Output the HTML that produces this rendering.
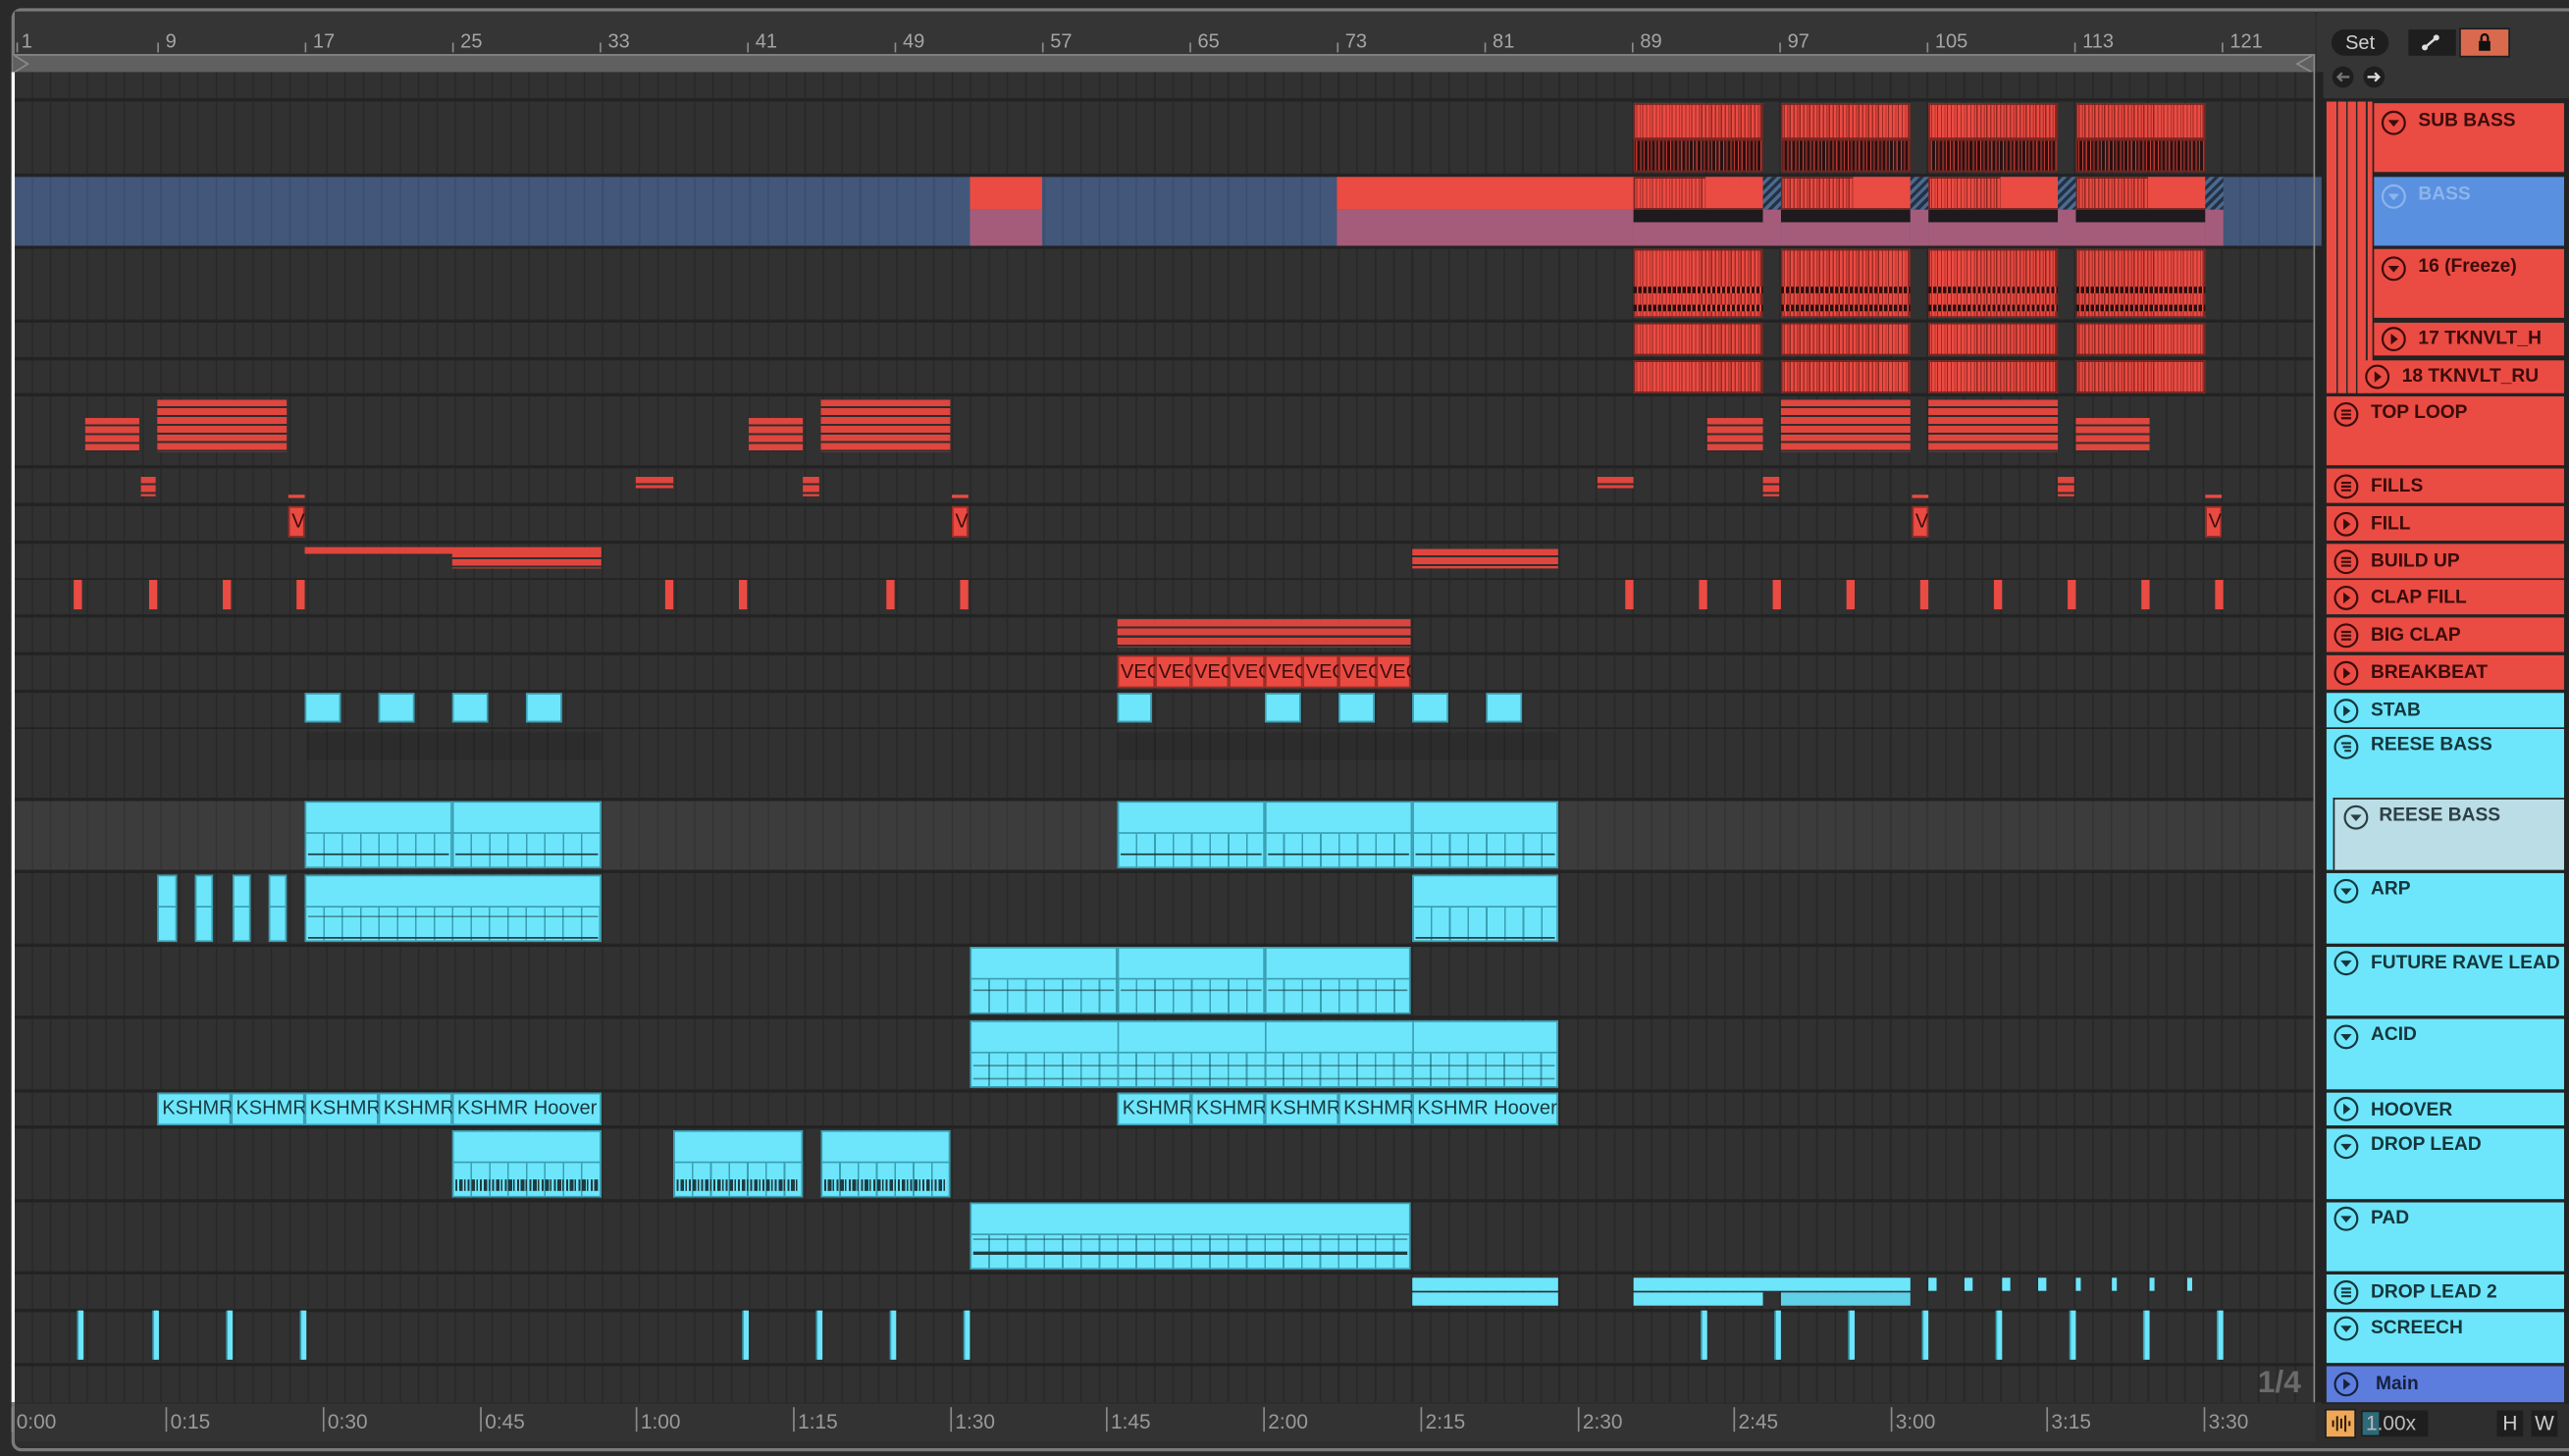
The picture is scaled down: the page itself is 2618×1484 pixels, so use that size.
<!DOCTYPE html>
<html><head><meta charset="utf-8"><style>
html,body{margin:0;padding:0;background:#2a2a2a;width:2618px;height:1484px;overflow:hidden}
#w{position:absolute;left:0;top:0;width:1568px;height:889px;transform:scale(1.669643);transform-origin:0 0;background:#2a2a2a;overflow:hidden;font-family:"Liberation Sans",sans-serif}
.a{position:absolute}
.row{position:absolute;left:7px;width:1405px;background-color:#313131;background-image:repeating-linear-gradient(90deg,#282828 0 1px,transparent 1px 11.23px);background-position:1px 0}
.rs{position:absolute;background:repeating-linear-gradient(90deg,#ea4b43 0 1.6px,#9e2e27 1.6px 2.4px,#ea4b43 2.4px 3.7px,#b3362e 3.7px 4.5px,#ea4b43 4.5px 5.2px,#8f2822 5.2px 6px);box-shadow:inset 0 0 0 1px #7a2520}
.rd{position:absolute;background:repeating-linear-gradient(90deg,#3a1616 0 1.5px,#b5362e 1.5px 2.2px,#2a1010 2.2px 4px,#c2443a 4px 4.6px);box-shadow:inset 0 0 0 1px #7a2520}
.r{position:absolute;background:#ea4b43}
.hl{position:absolute;background:repeating-linear-gradient(180deg,#e0453e 0 4.1px,#2e2e2e 4.1px 5.3px)}
.c{position:absolute;background:#6de6fb;box-shadow:inset 0 0 0 1px #3a9fb3}
.cl{position:absolute;left:0;right:0;bottom:0;height:52%;background:repeating-linear-gradient(90deg,#3a9fb3 0 1px,transparent 1px 11.23px);border-top:1px solid #3a9fb3}
.nl{position:absolute;height:1.4px;background:#1f3a40}
.bc{position:absolute;left:2px;right:2px;bottom:4px;height:7px;background:repeating-linear-gradient(90deg,#1f3a40 0 1.2px,transparent 1.2px 2.3px,#1f3a40 2.3px 4.5px,transparent 4.5px 5.3px,#1f3a40 5.3px 6.2px,transparent 6.2px 7.5px)}
.k{position:absolute;background:#6de6fb;box-shadow:inset 0 0 0 1px #3a9fb3;font-size:12px;color:#1a3a40;line-height:19px;padding-left:3px;overflow:hidden;white-space:nowrap;box-sizing:border-box}
.v{position:absolute;background:#e94a42;box-shadow:inset 0 0 0 1px #9a2c25;font-size:12px;color:#3a0e0c;line-height:20px;padding-left:2px;overflow:hidden;white-space:nowrap;box-sizing:border-box}
.n{position:absolute;top:18px;font-size:12px;color:#a5a5a5}
.tk{position:absolute;top:26px;width:1px;height:6px;background:#8a8a8a}
.t{position:absolute;top:859px;font-size:12.5px;color:#9a9a9a;border-left:1px solid #8a8a8a;padding-left:2px;line-height:12px;padding-top:3px}
.lb{position:absolute;box-sizing:border-box;font-weight:bold;font-size:11.5px;color:#3a0c0a;padding-left:27px;line-height:22px;white-space:nowrap;overflow:hidden}
.lb svg{position:absolute;left:4px;top:4px}
.R{background:#ea4b43}.C{background:#6de6fb;color:#15363c}
.cf{position:absolute;width:5px;height:18px;background:#ea4b43;top:354px}
.sc{position:absolute;width:3px;top:800px;height:30px;background:#6de6fb;box-shadow:-1px 0 0 #3a9fb3}
.dl{position:absolute;top:780px;height:8px;background:#6de6fb}
</style></head><body><div id="w">
<div class="a" style="left:7px;top:5px;width:1600px;height:877px;border:2px solid #7a7a7a;border-radius:6px;background:#2e2e2e"></div>
<div class="a" style="left:9px;top:7px;width:1404px;height:27px;background:#353535"></div>
<div class="a" style="left:1414px;top:7px;width:160px;height:55px;background:#353535"></div>
<div class="a" style="left:8px;top:33px;width:1404px;height:10px;background:#606060;border-top:1px solid #888;border-bottom:1px solid #888"></div>
<svg class="a" style="left:8px;top:33px" width="12" height="12"><path d="M1 1 L9 6 L1 11" fill="none" stroke="#8a8a8a" stroke-width="1"/></svg>
<svg class="a" style="left:1398px;top:33px" width="14" height="12"><path d="M13 1 L4 6 L13 11" fill="none" stroke="#8a8a8a" stroke-width="1"/></svg>
<div class="tk" style="left:10px"></div><div class="n" style="left:13px">1</div>
<div class="tk" style="left:96px"></div><div class="n" style="left:101px">9</div>
<div class="tk" style="left:186px"></div><div class="n" style="left:191px">17</div>
<div class="tk" style="left:276px"></div><div class="n" style="left:281px">25</div>
<div class="tk" style="left:366px"></div><div class="n" style="left:371px">33</div>
<div class="tk" style="left:456px"></div><div class="n" style="left:461px">41</div>
<div class="tk" style="left:546px"></div><div class="n" style="left:551px">49</div>
<div class="tk" style="left:636px"></div><div class="n" style="left:641px">57</div>
<div class="tk" style="left:726px"></div><div class="n" style="left:731px">65</div>
<div class="tk" style="left:816px"></div><div class="n" style="left:821px">73</div>
<div class="tk" style="left:906px"></div><div class="n" style="left:911px">81</div>
<div class="tk" style="left:996px"></div><div class="n" style="left:1001px">89</div>
<div class="tk" style="left:1086px"></div><div class="n" style="left:1091px">97</div>
<div class="tk" style="left:1176px"></div><div class="n" style="left:1181px">105</div>
<div class="tk" style="left:1266px"></div><div class="n" style="left:1271px">113</div>
<div class="tk" style="left:1356px"></div><div class="n" style="left:1361px">121</div>
<div class="a" style="left:7px;top:44px;width:1411px;height:812px;background:#232323"></div>
<div class="row" style="top:44px;height:16px"></div>
<div class="row" style="top:62px;height:44px"></div>
<div class="row" style="top:107.5px;height:42.5px;background-color:#42577a;background-image:repeating-linear-gradient(90deg,#3a4e6e 0 1px,transparent 1px 11.23px);width:1410px"></div>
<div class="row" style="top:151.5px;height:43px"></div>
<div class="row" style="top:196.5px;height:21px"></div>
<div class="row" style="top:219.5px;height:20.5px"></div>
<div class="row" style="top:242px;height:42px"></div>
<div class="row" style="top:286px;height:21px"></div>
<div class="row" style="top:309px;height:21px"></div>
<div class="row" style="top:332px;height:20.5px"></div>
<div class="row" style="top:354px;height:21px"></div>
<div class="row" style="top:377px;height:21px"></div>
<div class="row" style="top:400px;height:21px"></div>
<div class="row" style="top:423px;height:20.5px"></div>
<div class="row" style="top:445px;height:42px"></div>
<div class="row" style="top:489px;height:42px;background-color:#3c3c3c;background-image:repeating-linear-gradient(90deg,#343434 0 1px,transparent 1px 11.23px)"></div>
<div class="row" style="top:533px;height:42.5px"></div>
<div class="row" style="top:577.5px;height:42.5px"></div>
<div class="row" style="top:622px;height:42.5px"></div>
<div class="row" style="top:666.5px;height:20.5px"></div>
<div class="row" style="top:689px;height:42.5px"></div>
<div class="row" style="top:733.5px;height:42.5px"></div>
<div class="row" style="top:778px;height:20.5px"></div>
<div class="row" style="top:800.5px;height:31.5px"></div>
<div class="row" style="top:834px;height:22px"></div>
<div class="a" style="left:7px;top:44px;width:1.5px;height:812px;background:#fff"></div>
<div class="a" style="left:9px;top:857px;width:1404px;height:23px;background:#333"></div>
<div class="t" style="left:7px">0:00</div><div class="t" style="left:101px">0:15</div><div class="t" style="left:197px">0:30</div><div class="t" style="left:293px">0:45</div><div class="t" style="left:388px">1:00</div><div class="t" style="left:484px">1:15</div><div class="t" style="left:580px">1:30</div><div class="t" style="left:675px">1:45</div><div class="t" style="left:771px">2:00</div><div class="t" style="left:867px">2:15</div><div class="t" style="left:963px">2:30</div><div class="t" style="left:1058px">2:45</div><div class="t" style="left:1154px">3:00</div><div class="t" style="left:1249px">3:15</div><div class="t" style="left:1345px">3:30</div>
<div class="a" style="left:1378px;top:834px;font-size:19px;font-weight:bold;color:#6a6a6a">1/4</div>
<div class="a" style="left:1412px;top:33px;width:1px;height:823px;background:#8a8a8a"></div>

<div class="rs" style="left:997px;top:63px;width:79px;height:22px"></div><div class="rd" style="left:997px;top:85px;width:79px;height:20px"></div>
<div class="rs" style="left:1087px;top:63px;width:79px;height:22px"></div><div class="rd" style="left:1087px;top:85px;width:79px;height:20px"></div>
<div class="rs" style="left:1177px;top:63px;width:79px;height:22px"></div><div class="rd" style="left:1177px;top:85px;width:79px;height:20px"></div>
<div class="rs" style="left:1267px;top:63px;width:79px;height:22px"></div><div class="rd" style="left:1267px;top:85px;width:79px;height:20px"></div>
<div class="r" style="left:592px;top:108px;width:44px;height:20px"></div><div class="a" style="left:592px;top:128px;width:44px;height:22px;background:#a55c7a"></div>
<div class="r" style="left:816px;top:108px;width:181px;height:20px"></div><div class="a" style="left:816px;top:128px;width:181px;height:22px;background:#a55c7a"></div>
<div class="rs" style="left:997px;top:108px;width:79px;height:20px"></div><div class="a" style="left:997px;top:128px;width:79px;height:22px;background:linear-gradient(180deg,#1e1a1e 0 35%,#a55c7a 35%)"></div>
<div class="rs" style="left:1087px;top:108px;width:79px;height:20px"></div><div class="a" style="left:1087px;top:128px;width:79px;height:22px;background:linear-gradient(180deg,#1e1a1e 0 35%,#a55c7a 35%)"></div>
<div class="rs" style="left:1177px;top:108px;width:79px;height:20px"></div><div class="a" style="left:1177px;top:128px;width:79px;height:22px;background:linear-gradient(180deg,#1e1a1e 0 35%,#a55c7a 35%)"></div>
<div class="rs" style="left:1267px;top:108px;width:79px;height:20px"></div><div class="a" style="left:1267px;top:128px;width:79px;height:22px;background:linear-gradient(180deg,#1e1a1e 0 35%,#a55c7a 35%)"></div>
<div class="r" style="left:1041px;top:108px;width:35px;height:19px"></div><div class="r" style="left:1131px;top:108px;width:35px;height:19px"></div><div class="r" style="left:1221px;top:108px;width:35px;height:19px"></div><div class="r" style="left:1311px;top:108px;width:35px;height:19px"></div>
<div class="a" style="left:1076px;top:108px;width:11px;height:20px;background:repeating-linear-gradient(135deg,#253142 0 2px,#4a6a90 2px 4px)"></div><div class="a" style="left:1076px;top:128px;width:11px;height:22px;background:#a55c7a"></div>
<div class="a" style="left:1166px;top:108px;width:11px;height:20px;background:repeating-linear-gradient(135deg,#253142 0 2px,#4a6a90 2px 4px)"></div><div class="a" style="left:1166px;top:128px;width:11px;height:22px;background:#a55c7a"></div>
<div class="a" style="left:1256px;top:108px;width:11px;height:20px;background:repeating-linear-gradient(135deg,#253142 0 2px,#4a6a90 2px 4px)"></div><div class="a" style="left:1256px;top:128px;width:11px;height:22px;background:#a55c7a"></div>
<div class="a" style="left:1346px;top:108px;width:11px;height:20px;background:repeating-linear-gradient(135deg,#253142 0 2px,#4a6a90 2px 4px)"></div><div class="a" style="left:1346px;top:128px;width:11px;height:22px;background:#a55c7a"></div>
<div class="rs" style="left:997px;top:152px;width:79px;height:42px"></div><div class="rs" style="left:1087px;top:152px;width:79px;height:42px"></div><div class="rs" style="left:1177px;top:152px;width:79px;height:42px"></div><div class="rs" style="left:1267px;top:152px;width:79px;height:42px"></div>
<div class="a" style="left:997px;top:175px;width:79px;height:4px;background:repeating-linear-gradient(90deg,#2a0e0e 0 2px,#ea4b43 2px 3px)"></div><div class="a" style="left:1087px;top:175px;width:79px;height:4px;background:repeating-linear-gradient(90deg,#2a0e0e 0 2px,#ea4b43 2px 3px)"></div><div class="a" style="left:1177px;top:175px;width:79px;height:4px;background:repeating-linear-gradient(90deg,#2a0e0e 0 2px,#ea4b43 2px 3px)"></div><div class="a" style="left:1267px;top:175px;width:79px;height:4px;background:repeating-linear-gradient(90deg,#2a0e0e 0 2px,#ea4b43 2px 3px)"></div>
<div class="a" style="left:997px;top:186px;width:79px;height:4px;background:repeating-linear-gradient(90deg,#2a0e0e 0 2px,#ea4b43 2px 3px)"></div><div class="a" style="left:1087px;top:186px;width:79px;height:4px;background:repeating-linear-gradient(90deg,#2a0e0e 0 2px,#ea4b43 2px 3px)"></div><div class="a" style="left:1177px;top:186px;width:79px;height:4px;background:repeating-linear-gradient(90deg,#2a0e0e 0 2px,#ea4b43 2px 3px)"></div><div class="a" style="left:1267px;top:186px;width:79px;height:4px;background:repeating-linear-gradient(90deg,#2a0e0e 0 2px,#ea4b43 2px 3px)"></div>
<div class="rs" style="left:997px;top:197px;width:79px;height:20px"></div><div class="rs" style="left:1087px;top:197px;width:79px;height:20px"></div><div class="rs" style="left:1177px;top:197px;width:79px;height:20px"></div><div class="rs" style="left:1267px;top:197px;width:79px;height:20px"></div>
<div class="rs" style="left:997px;top:220px;width:79px;height:20px"></div><div class="rs" style="left:1087px;top:220px;width:79px;height:20px"></div><div class="rs" style="left:1177px;top:220px;width:79px;height:20px"></div><div class="rs" style="left:1267px;top:220px;width:79px;height:20px"></div>
<div class="hl" style="left:52px;top:255px;width:33px;height:21px"></div>
<div class="hl" style="left:96px;top:244px;width:79px;height:32px"></div>
<div class="hl" style="left:457px;top:255px;width:33px;height:21px"></div>
<div class="hl" style="left:501px;top:244px;width:79px;height:32px"></div>
<div class="hl" style="left:1042px;top:255px;width:34px;height:21px"></div>
<div class="hl" style="left:1087px;top:244px;width:79px;height:32px"></div>
<div class="hl" style="left:1177px;top:244px;width:79px;height:32px"></div>
<div class="hl" style="left:1267px;top:255px;width:45px;height:21px"></div>
<div class="hl" style="left:86px;top:291px;width:9px;height:12px"></div>
<div class="hl" style="left:388px;top:291px;width:23px;height:7px"></div>
<div class="hl" style="left:490px;top:291px;width:10px;height:12px"></div>
<div class="hl" style="left:975px;top:291px;width:22px;height:7px"></div>
<div class="hl" style="left:1076px;top:291px;width:10px;height:12px"></div>
<div class="hl" style="left:1256px;top:291px;width:10px;height:12px"></div>
<div class="r" style="left:176px;top:302px;width:10px;height:2px"></div><div class="v" style="left:176px;top:309px;width:10px;height:19px;line-height:19px">V</div>
<div class="r" style="left:581px;top:302px;width:10px;height:2px"></div><div class="v" style="left:581px;top:309px;width:10px;height:19px;line-height:19px">V</div>
<div class="r" style="left:1167px;top:302px;width:10px;height:2px"></div><div class="v" style="left:1167px;top:309px;width:10px;height:19px;line-height:19px">V</div>
<div class="r" style="left:1346px;top:302px;width:10px;height:2px"></div><div class="v" style="left:1346px;top:309px;width:10px;height:19px;line-height:19px">V</div>
<div class="hl" style="left:186px;top:334px;width:181px;height:5px"></div>
<div class="hl" style="left:276px;top:336px;width:91px;height:11px"></div>
<div class="hl" style="left:862px;top:335px;width:89px;height:12px"></div>
<div class="cf" style="left:45px"></div><div class="cf" style="left:91px"></div><div class="cf" style="left:136px"></div><div class="cf" style="left:181px"></div><div class="cf" style="left:406px"></div><div class="cf" style="left:451px"></div><div class="cf" style="left:541px"></div><div class="cf" style="left:586px"></div><div class="cf" style="left:992px"></div><div class="cf" style="left:1037px"></div><div class="cf" style="left:1082px"></div><div class="cf" style="left:1127px"></div><div class="cf" style="left:1172px"></div><div class="cf" style="left:1217px"></div><div class="cf" style="left:1262px"></div><div class="cf" style="left:1307px"></div><div class="cf" style="left:1352px"></div>
<div class="hl" style="left:682px;top:378px;width:179px;height:17px;background:repeating-linear-gradient(180deg,#d9463f 0 4.3px,#2e2e2e 4.3px 5.6px)"></div>
<div class="v" style="left:682px;top:400px;width:23px;height:20px">VEC</div><div class="v" style="left:705px;top:400px;width:22px;height:20px">VEC</div><div class="v" style="left:727px;top:400px;width:23px;height:20px">VEC</div><div class="v" style="left:750px;top:400px;width:22px;height:20px">VEC</div><div class="v" style="left:772px;top:400px;width:23px;height:20px">VEC</div><div class="v" style="left:795px;top:400px;width:22px;height:20px">VEC</div><div class="v" style="left:817px;top:400px;width:23px;height:20px">VEC</div><div class="v" style="left:840px;top:400px;width:21px;height:20px">VEC</div>
<div class="c" style="left:186px;top:423px;width:22px;height:18px"></div><div class="c" style="left:231px;top:423px;width:22px;height:18px"></div><div class="c" style="left:276px;top:423px;width:22px;height:18px"></div><div class="c" style="left:321px;top:423px;width:22px;height:18px"></div>
<div class="c" style="left:682px;top:423px;width:21px;height:18px"></div><div class="c" style="left:772px;top:423px;width:22px;height:18px"></div><div class="c" style="left:817px;top:423px;width:22px;height:18px"></div><div class="c" style="left:862px;top:423px;width:22px;height:18px"></div><div class="c" style="left:907px;top:423px;width:22px;height:18px"></div>
<div class="a" style="left:187px;top:447px;width:180px;height:17px;background:rgba(0,0,0,0.1)"></div>
<div class="a" style="left:682px;top:447px;width:269px;height:17px;background:rgba(0,0,0,0.1)"></div>
<div class="c" style="left:186px;top:489px;width:90px;height:41px"><div class="cl"></div><div class="nl" style="left:2px;right:2px;top:32px"></div></div>
<div class="c" style="left:276px;top:489px;width:91px;height:41px"><div class="cl"></div><div class="nl" style="left:2px;right:2px;top:32px"></div></div>
<div class="c" style="left:682px;top:489px;width:90px;height:41px"><div class="cl"></div><div class="nl" style="left:2px;right:2px;top:32px"></div></div>
<div class="c" style="left:772px;top:489px;width:90px;height:41px"><div class="cl"></div><div class="nl" style="left:2px;right:2px;top:32px"></div></div>
<div class="c" style="left:862px;top:489px;width:89px;height:41px"><div class="cl"></div><div class="nl" style="left:2px;right:2px;top:32px"></div></div>
<div class="c" style="left:96px;top:534px;width:12px;height:41px"><div class="cl"></div></div><div class="c" style="left:119px;top:534px;width:11px;height:41px"><div class="cl"></div></div><div class="c" style="left:142px;top:534px;width:11px;height:41px"><div class="cl"></div></div><div class="c" style="left:164px;top:534px;width:11px;height:41px"><div class="cl"></div></div>
<div class="c" style="left:186px;top:534px;width:181px;height:41px"><div class="cl"></div><div class="nl" style="left:2px;right:2px;top:38px"></div><div class="nl" style="left:2px;right:2px;top:25px;opacity:.5"></div></div>
<div class="c" style="left:862px;top:534px;width:89px;height:41px"><div class="cl"></div><div class="nl" style="left:2px;right:2px;top:38px"></div></div>
<div class="c" style="left:592px;top:578px;width:90px;height:41px"><div class="cl"></div><div class="nl" style="left:2px;right:2px;top:26px;opacity:.6"></div></div>
<div class="c" style="left:682px;top:578px;width:90px;height:41px"><div class="cl"></div><div class="nl" style="left:2px;right:2px;top:26px;opacity:.6"></div></div>
<div class="c" style="left:772px;top:578px;width:89px;height:41px"><div class="cl"></div><div class="nl" style="left:2px;right:2px;top:26px;opacity:.6"></div></div>
<div class="c" style="left:592px;top:623px;width:359px;height:41px"><div class="cl"></div><div class="nl" style="left:2px;right:2px;top:27px;opacity:.5"></div><div class="nl" style="left:2px;right:2px;top:35px;opacity:.5"></div></div>
<div class="a" style="left:682px;top:623px;width:1px;height:41px;background:#3a9fb3"></div><div class="a" style="left:772px;top:623px;width:1px;height:41px;background:#3a9fb3"></div><div class="a" style="left:862px;top:623px;width:1px;height:41px;background:#3a9fb3"></div>
<div class="k" style="left:96px;top:667px;width:45px;height:20px">KSHMR</div><div class="k" style="left:141px;top:667px;width:45px;height:20px">KSHMR</div><div class="k" style="left:186px;top:667px;width:45px;height:20px">KSHMR</div><div class="k" style="left:231px;top:667px;width:45px;height:20px">KSHMR</div><div class="k" style="left:276px;top:667px;width:91px;height:20px">KSHMR Hoover</div>
<div class="k" style="left:682px;top:667px;width:45px;height:20px">KSHMR</div><div class="k" style="left:727px;top:667px;width:45px;height:20px">KSHMR</div><div class="k" style="left:772px;top:667px;width:45px;height:20px">KSHMR</div><div class="k" style="left:817px;top:667px;width:45px;height:20px">KSHMR</div><div class="k" style="left:862px;top:667px;width:89px;height:20px">KSHMR Hoover</div>
<div class="c" style="left:276px;top:690px;width:91px;height:41px"><div class="cl"></div><div class="bc"></div></div>
<div class="c" style="left:411px;top:690px;width:79px;height:41px"><div class="cl"></div><div class="bc"></div></div>
<div class="c" style="left:501px;top:690px;width:79px;height:41px"><div class="cl"></div><div class="bc"></div></div>
<div class="c" style="left:592px;top:734px;width:269px;height:41px"><div class="cl"></div><div class="nl" style="left:2px;right:2px;top:30px;height:2px"></div><div class="nl" style="left:2px;right:2px;top:22px;opacity:.5"></div></div>
<div class="dl" style="left:862px;width:89px"></div><div class="dl" style="left:862px;top:789px;width:89px"></div>
<div class="dl" style="left:997px;width:169px"></div><div class="dl" style="left:997px;top:789px;width:79px"></div><div class="dl" style="left:1087px;top:789px;width:79px;background:#5fd0e6"></div>
<div class="dl" style="left:1177px;width:5px"></div><div class="dl" style="left:1199px;width:5px"></div><div class="dl" style="left:1222px;width:5px"></div><div class="dl" style="left:1244px;width:5px"></div><div class="dl" style="left:1267px;width:3px"></div><div class="dl" style="left:1289px;width:3px"></div><div class="dl" style="left:1312px;width:3px"></div><div class="dl" style="left:1335px;width:3px"></div>
<div class="sc" style="left:48px"></div><div class="sc" style="left:94px"></div><div class="sc" style="left:139px"></div><div class="sc" style="left:184px"></div><div class="sc" style="left:454px"></div><div class="sc" style="left:499px"></div><div class="sc" style="left:544px"></div><div class="sc" style="left:589px"></div><div class="sc" style="left:1039px"></div><div class="sc" style="left:1084px"></div><div class="sc" style="left:1129px"></div><div class="sc" style="left:1174px"></div><div class="sc" style="left:1219px"></div><div class="sc" style="left:1264px"></div><div class="sc" style="left:1309px"></div><div class="sc" style="left:1354px"></div>

<div class="a" style="left:1417px;top:60px;width:151px;height:797px;background:#232323"></div>
<div class="a" style="left:1423px;top:18px;width:35px;height:16px;border-radius:8px;background:#1e1e1e;color:#cfcfcf;font-size:12px;line-height:16px;text-align:center">Set</div>
<div class="a" style="left:1470px;top:18px;width:29px;height:16px;background:#1e1e1e"><svg width="29" height="16"><path d="M10 11 L17 5" stroke="#ddd" stroke-width="1.5"/><circle cx="10" cy="11" r="1.8" fill="#ddd"/><circle cx="17" cy="5" r="1.8" fill="#ddd"/></svg></div>
<div class="a" style="left:1502px;top:18px;width:29px;height:16px;background:#da6a4e;box-shadow:0 0 0 1px #1e1e1e"><svg width="29" height="16"><rect x="11" y="7" width="7" height="6" fill="#111"/><path d="M12.5 7 V5 a2 2 0 0 1 4 0 V7" fill="none" stroke="#111" stroke-width="1.4"/></svg></div>
<svg class="a" style="left:1423px;top:40px" width="40" height="14"><circle cx="7" cy="7" r="6.5" fill="#1e1e1e"/><path d="M11 7 H4 M6.5 4.5 L4 7 L6.5 9.5" stroke="#777" stroke-width="1.4" fill="none"/><circle cx="26" cy="7" r="6.5" fill="#1e1e1e"/><path d="M22 7 H29 M26.5 4.5 L29 7 L26.5 9.5" stroke="#ddd" stroke-width="1.4" fill="none"/></svg>
<div class="a" style="left:1420px;top:62px;width:28px;height:178px;background:repeating-linear-gradient(90deg,#ea4b43 0 5px,#2a2a2a 5px 6px);background-position:1px 0"></div>
<div class="lb R" style="left:1449px;top:63px;width:116px;height:42px"><svg width="16" height="16"><circle cx="8" cy="8" r="6.8" fill="none" stroke="#3a0c0a" stroke-width="1.3"/><path d="M4.6 6.3 H11.4 L8 10.3Z" fill="#3a0c0a"/></svg>SUB BASS</div>
<div class="lb" style="left:1449px;top:107.5px;width:116px;height:42.5px;background:#5a90e0;color:#8db5ec"><svg width="16" height="16"><circle cx="8" cy="8" r="6.8" fill="none" stroke="#8db5ec" stroke-width="1.3"/><path d="M4.6 6.3 H11.4 L8 10.3Z" fill="#8db5ec"/></svg>BASS</div>
<div class="lb R" style="left:1449px;top:152px;width:116px;height:42px"><svg width="16" height="16"><circle cx="8" cy="8" r="6.8" fill="none" stroke="#3a0c0a" stroke-width="1.3"/><path d="M4.6 6.3 H11.4 L8 10.3Z" fill="#3a0c0a"/></svg>16 (Freeze)</div>
<div class="lb R" style="left:1449px;top:196.5px;width:116px;height:20.5px;line-height:21px"><svg width="16" height="16" style="top:2.5px"><circle cx="8" cy="8" r="6.8" fill="none" stroke="#3a0c0a" stroke-width="1.3"/><path d="M6.3 4.6 V11.4 L10.6 8Z" fill="#3a0c0a"/></svg>17 TKNVLT_H</div>
<div class="lb R" style="left:1439px;top:219.5px;width:126px;height:20.5px;line-height:21px"><svg width="16" height="16" style="top:2.5px"><circle cx="8" cy="8" r="6.8" fill="none" stroke="#3a0c0a" stroke-width="1.3"/><path d="M6.3 4.6 V11.4 L10.6 8Z" fill="#3a0c0a"/></svg>18 TKNVLT_RU</div>
<div class="lb R" style="left:1420px;top:242px;width:145px;height:42px;line-height:21px"><svg width="16" height="16" style="top:2.5px"><circle cx="8" cy="8" r="6.8" fill="none" stroke="#3a0c0a" stroke-width="1.3"/><path d="M5 5.7 H11 M5 8 H11 M5 10.3 H11" stroke="#3a0c0a" stroke-width="1.3"/></svg>TOP LOOP</div>
<div class="lb R" style="left:1420px;top:286px;width:145px;height:21px"><svg width="16" height="16" style="top:2.5px"><circle cx="8" cy="8" r="6.8" fill="none" stroke="#3a0c0a" stroke-width="1.3"/><path d="M5 5.7 H11 M5 8 H11 M5 10.3 H11" stroke="#3a0c0a" stroke-width="1.3"/></svg>FILLS</div>
<div class="lb R" style="left:1420px;top:309px;width:145px;height:21px"><svg width="16" height="16" style="top:2.5px"><circle cx="8" cy="8" r="6.8" fill="none" stroke="#3a0c0a" stroke-width="1.3"/><path d="M6.3 4.6 V11.4 L10.6 8Z" fill="#3a0c0a"/></svg>FILL</div>
<div class="lb R" style="left:1420px;top:332px;width:145px;height:20.5px"><svg width="16" height="16" style="top:2.5px"><circle cx="8" cy="8" r="6.8" fill="none" stroke="#3a0c0a" stroke-width="1.3"/><path d="M5 5.7 H11 M5 8 H11 M5 10.3 H11" stroke="#3a0c0a" stroke-width="1.3"/></svg>BUILD UP</div>
<div class="lb R" style="left:1420px;top:354px;width:145px;height:21px"><svg width="16" height="16" style="top:2.5px"><circle cx="8" cy="8" r="6.8" fill="none" stroke="#3a0c0a" stroke-width="1.3"/><path d="M6.3 4.6 V11.4 L10.6 8Z" fill="#3a0c0a"/></svg>CLAP FILL</div>
<div class="lb R" style="left:1420px;top:377px;width:145px;height:21px"><svg width="16" height="16" style="top:2.5px"><circle cx="8" cy="8" r="6.8" fill="none" stroke="#3a0c0a" stroke-width="1.3"/><path d="M5 5.7 H11 M5 8 H11 M5 10.3 H11" stroke="#3a0c0a" stroke-width="1.3"/></svg>BIG CLAP</div>
<div class="lb R" style="left:1420px;top:400px;width:145px;height:21px"><svg width="16" height="16" style="top:2.5px"><circle cx="8" cy="8" r="6.8" fill="none" stroke="#3a0c0a" stroke-width="1.3"/><path d="M6.3 4.6 V11.4 L10.6 8Z" fill="#3a0c0a"/></svg>BREAKBEAT</div>
<div class="lb C" style="left:1420px;top:423px;width:145px;height:20.5px"><svg width="16" height="16" style="top:2.5px"><circle cx="8" cy="8" r="6.8" fill="none" stroke="#15363c" stroke-width="1.3"/><path d="M6.3 4.6 V11.4 L10.6 8Z" fill="#15363c"/></svg>STAB</div>
<div class="lb C" style="left:1420px;top:445px;width:145px;height:86px;line-height:21px"><svg width="16" height="16" style="top:2.5px"><circle cx="8" cy="8" r="6.8" fill="none" stroke="#15363c" stroke-width="1.3"/><path d="M5 5.7 H11 M6 8 H11 M7 10.3 H11" stroke="#15363c" stroke-width="1.3"/></svg>REESE BASS</div>
<div class="lb" style="left:1424px;top:487px;width:141px;height:44px;background:#badde6;border:1.5px solid #222;border-right:none;border-bottom:none;color:#2d3f44;padding-left:27px;line-height:21px"><svg width="16" height="16" style="left:5px;top:2.5px"><circle cx="8" cy="8" r="6.8" fill="none" stroke="#2d3f44" stroke-width="1.3"/><path d="M4.6 6.3 H11.4 L8 10.3Z" fill="#2d3f44"/></svg>REESE BASS</div>
<div class="lb C" style="left:1420px;top:533px;width:145px;height:42.5px;line-height:21px"><svg width="16" height="16" style="top:2.5px"><circle cx="8" cy="8" r="6.8" fill="none" stroke="#15363c" stroke-width="1.3"/><path d="M4.6 6.3 H11.4 L8 10.3Z" fill="#15363c"/></svg>ARP</div>
<div class="lb C" style="left:1420px;top:577.5px;width:145px;height:42.5px;line-height:21px"><svg width="16" height="16" style="top:2.5px"><circle cx="8" cy="8" r="6.8" fill="none" stroke="#15363c" stroke-width="1.3"/><path d="M4.6 6.3 H11.4 L8 10.3Z" fill="#15363c"/></svg>FUTURE RAVE LEAD</div>
<div class="lb C" style="left:1420px;top:622px;width:145px;height:42.5px;line-height:21px"><svg width="16" height="16" style="top:2.5px"><circle cx="8" cy="8" r="6.8" fill="none" stroke="#15363c" stroke-width="1.3"/><path d="M4.6 6.3 H11.4 L8 10.3Z" fill="#15363c"/></svg>ACID</div>
<div class="lb C" style="left:1420px;top:666.5px;width:145px;height:20.5px"><svg width="16" height="16" style="top:2.5px"><circle cx="8" cy="8" r="6.8" fill="none" stroke="#15363c" stroke-width="1.3"/><path d="M6.3 4.6 V11.4 L10.6 8Z" fill="#15363c"/></svg>HOOVER</div>
<div class="lb C" style="left:1420px;top:689px;width:145px;height:42.5px;line-height:21px"><svg width="16" height="16" style="top:2.5px"><circle cx="8" cy="8" r="6.8" fill="none" stroke="#15363c" stroke-width="1.3"/><path d="M4.6 6.3 H11.4 L8 10.3Z" fill="#15363c"/></svg>DROP LEAD</div>
<div class="lb C" style="left:1420px;top:733.5px;width:145px;height:42.5px;line-height:21px"><svg width="16" height="16" style="top:2.5px"><circle cx="8" cy="8" r="6.8" fill="none" stroke="#15363c" stroke-width="1.3"/><path d="M4.6 6.3 H11.4 L8 10.3Z" fill="#15363c"/></svg>PAD</div>
<div class="lb C" style="left:1420px;top:778px;width:145px;height:20.5px"><svg width="16" height="16" style="top:2.5px"><circle cx="8" cy="8" r="6.8" fill="none" stroke="#15363c" stroke-width="1.3"/><path d="M5 5.7 H11 M5 8 H11 M5 10.3 H11" stroke="#15363c" stroke-width="1.3"/></svg>DROP LEAD 2</div>
<div class="lb C" style="left:1420px;top:800.5px;width:145px;height:31.5px;line-height:21px"><svg width="16" height="16" style="top:2.5px"><circle cx="8" cy="8" r="6.8" fill="none" stroke="#15363c" stroke-width="1.3"/><path d="M4.6 6.3 H11.4 L8 10.3Z" fill="#15363c"/></svg>SCREECH</div>
<div class="lb" style="left:1420px;top:834px;width:145px;height:22px;background:#5c7ddd;color:#17213d;font-weight:bold;padding-left:30px"><svg width="16" height="16" style="top:3px"><circle cx="8" cy="8" r="6.8" fill="none" stroke="#17213d" stroke-width="1.3"/><path d="M6.3 4.6 V11.4 L10.6 8Z" fill="#17213d"/></svg>Main</div>
<div class="a" style="left:1417px;top:857px;width:151px;height:25px;background:#2e2e2e"></div>
<div class="a" style="left:1420px;top:861px;width:17px;height:16px;background:#f0a858;box-shadow:0 0 0 1px #1e1e1e"><svg width="17" height="16"><path d="M4 6 V10 M6.5 3.5 V12.5 M9 5 V11 M11.5 3 V13 M14 6.5 V9.5" stroke="#2a1a0a" stroke-width="1.2"/></svg></div>
<div class="a" style="left:1441px;top:861px;width:41px;height:16px;background:#1e1e1e;color:#bbb;font-size:12.5px;line-height:16px"><div class="a" style="left:1px;top:1px;width:10px;height:14px;background:#2d6a7a"></div><span style="position:relative;left:3px">1.00x</span></div>
<div class="a" style="left:1524px;top:861px;width:16px;height:16px;background:#1e1e1e;color:#ccc;font-size:12.5px;line-height:16px;text-align:center">H</div>
<div class="a" style="left:1545px;top:861px;width:16px;height:16px;background:#1e1e1e;color:#ccc;font-size:12.5px;line-height:16px;text-align:center">W</div>
</div></body></html>
